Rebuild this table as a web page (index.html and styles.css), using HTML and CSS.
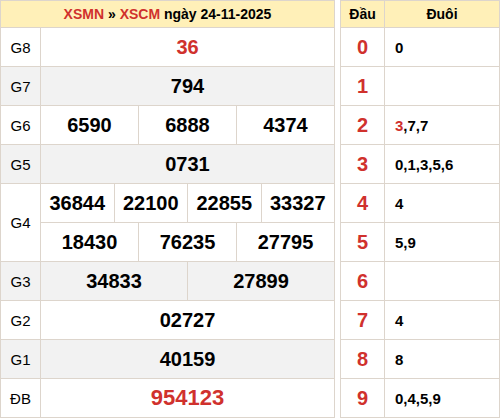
FILE: index.html
```html
<!DOCTYPE html>
<html>
<head>
<meta charset="utf-8">
<link rel="stylesheet" href="styles.css">
</head>
<body>
<div class="wrap">
  <table class="kq">
    <colgroup>
      <col class="c-label">
      <col><col><col><col><col><col><col><col><col><col><col><col>
    </colgroup>
    <tr class="head"><th colspan="13"><span class="red">XSMN</span> » <span class="red">XSCM</span> ngày 24-11-2025</th></tr>
    <tr><td class="lbl">G8</td><td colspan="12" class="num red">36</td></tr>
    <tr class="alt"><td class="lbl">G7</td><td colspan="12" class="num">794</td></tr>
    <tr><td class="lbl">G6</td><td colspan="4" class="num">6590</td><td colspan="4" class="num">6888</td><td colspan="4" class="num">4374</td></tr>
    <tr class="alt"><td class="lbl">G5</td><td colspan="12" class="num">0731</td></tr>
    <tr><td class="lbl" rowspan="2">G4</td><td colspan="3" class="num">36844</td><td colspan="3" class="num">22100</td><td colspan="3" class="num">22855</td><td colspan="3" class="num">33327</td></tr>
    <tr><td colspan="4" class="num">18430</td><td colspan="4" class="num">76235</td><td colspan="4" class="num">27795</td></tr>
    <tr class="alt"><td class="lbl">G3</td><td colspan="6" class="num">34833</td><td colspan="6" class="num">27899</td></tr>
    <tr><td class="lbl">G2</td><td colspan="12" class="num">02727</td></tr>
    <tr class="alt"><td class="lbl">G1</td><td colspan="12" class="num">40159</td></tr>
    <tr><td class="lbl">ĐB</td><td colspan="12" class="num db">954123</td></tr>
  </table>
  <table class="lt">
    <colgroup><col class="c-dau"><col></colgroup>
    <tr class="head"><th>Đầu</th><th>Đuôi</th></tr>
    <tr><td class="dau">0</td><td class="duoi">0</td></tr>
    <tr><td class="dau">1</td><td class="duoi"></td></tr>
    <tr><td class="dau">2</td><td class="duoi"><span class="red">3</span>,7,7</td></tr>
    <tr><td class="dau">3</td><td class="duoi">0,1,3,5,6</td></tr>
    <tr><td class="dau">4</td><td class="duoi">4</td></tr>
    <tr><td class="dau">5</td><td class="duoi">5,9</td></tr>
    <tr><td class="dau">6</td><td class="duoi"></td></tr>
    <tr><td class="dau">7</td><td class="duoi">4</td></tr>
    <tr><td class="dau">8</td><td class="duoi">8</td></tr>
    <tr><td class="dau">9</td><td class="duoi">0,4,5,9</td></tr>
  </table>
</div>
</body>
</html>
```

FILE: styles.css
```css
* { box-sizing: border-box; }
body {
  margin: 0;
  background: #fff;
  font-family: "Liberation Sans", Arial, sans-serif;
  color: #000;
}
.wrap {
  display: flex;
  gap: 5px;
  align-items: flex-start;
}
table {
  border-collapse: collapse;
  table-layout: fixed;
}
.kq { width: 335px; }
.lt { width: 160px; }
.c-label { width: 40px; }
.c-dau { width: 44px; }
th, td {
  border: 1px solid #ddd5cc;
  padding: 0;
  text-align: center;
}
tr { height: 39px; }
tr.head { height: 27px; }
.head th {
  background: #fff0b8;
  font-size: 14px;
  font-weight: bold;
}
.red { color: #d0312d; }
.alt td { background: #f2f2f2; }
.lbl {
  font-size: 15px;
  background: #fff;
}
.alt .lbl { background: #f2f2f2; }
.num {
  font-size: 20px;
  font-weight: bold;
}
.num.red, .num.db { color: #d0312d; }
.num.db { font-size: 22px; }
.dau {
  color: #d0312d;
  font-size: 20px;
  font-weight: bold;
}
.duoi {
  text-align: left;
  padding-left: 10px;
  font-size: 15px;
  font-weight: bold;
}
```
